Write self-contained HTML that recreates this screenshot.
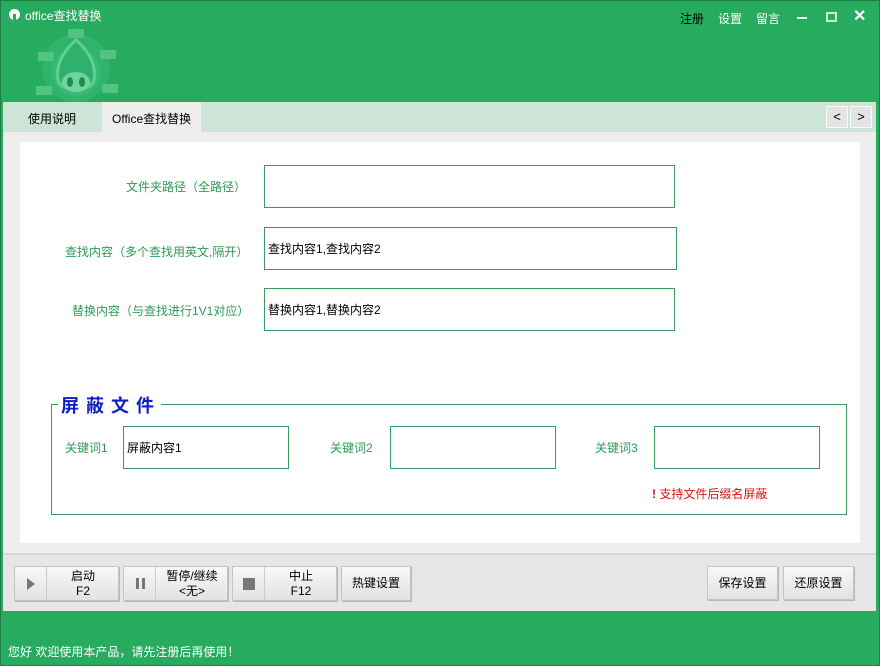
<!DOCTYPE html>
<html><head><meta charset="utf-8"><style>
*{margin:0;padding:0;box-sizing:border-box}
body{width:880px;height:666px;overflow:hidden;background:#27ab5f;font-family:"Liberation Sans","Noto Sans CJK SC",sans-serif;font-size:12px;position:relative}
.abs{position:absolute}
.lbl{color:#2e9a5a;font-size:12px;position:absolute}
.in{position:absolute;background:#fff;border:1px solid #3a9a62;font-size:12px;color:#000;padding-left:3px;display:flex;align-items:center}
.btn{position:absolute;background:linear-gradient(#f8f8f8,#e2e2e2);border:1px solid #c4c4c4;box-shadow:1px 1px 0 #b8b8b8;font-size:12px;color:#000;text-align:center}
</style></head><body>
<div class="abs" style="left:0;top:0;width:880px;height:666px;border:1px solid #1d7d45"></div>
<!-- title -->
<div class="abs" style="left:9px;top:9px;width:11px;height:11px;border-radius:50%;background:#fff"></div>
<div class="abs" style="left:13px;top:14px;width:3px;height:7px;background:#27ab5f"></div>
<div class="abs" style="left:25px;top:7px;color:#fff;font-size:12px">office查找替换</div>
<svg class="abs" style="left:28px;top:24px" width="100" height="80">
<circle cx="48" cy="44" r="34" fill="#3fc07a" opacity=".4"/>
<circle cx="48" cy="48" r="24" fill="#3cbf78" opacity=".6"/>
<path d="M48 16 C32 30 28 44 30 56 C32 68 64 68 66 56 C68 44 64 30 48 16Z" fill="#30b06d" stroke="#5fcf92" stroke-width="3"/>
<ellipse cx="48" cy="58" rx="14" ry="10" fill="#6fd49e"/>
<ellipse cx="42" cy="58" rx="3" ry="5" fill="#1f8a50"/><ellipse cx="54" cy="58" rx="3" ry="5" fill="#1f8a50"/>
<g fill="#5ec98e" opacity=".8"><rect x="40" y="5" width="16" height="9"/><rect x="10" y="28" width="16" height="9"/>
<rect x="72" y="26" width="16" height="9"/><rect x="8" y="62" width="16" height="9"/>
<rect x="74" y="60" width="16" height="9"/></g>
</svg>
<div class="abs" style="left:680px;top:10px;color:#000;font-size:12px">注册</div>
<div class="abs" style="left:718px;top:10px;color:#fff;font-size:12px">设置</div>
<div class="abs" style="left:756px;top:10px;color:#fff;font-size:12px">留言</div>
<div class="abs" style="left:797px;top:17px;width:10px;height:2px;background:#fff"></div>
<div class="abs" style="left:826px;top:12px;width:11px;height:10px;border:2px solid #c8ecd6"></div>
<div class="abs" style="left:853px;top:6px;color:#fff;font-size:16px;font-weight:bold">✕</div>
<!-- tabs -->
<div class="abs" style="left:3px;top:102px;width:873px;height:30px;background:#cce5d6"></div>
<div class="abs" style="left:28px;top:110px;font-size:12px">使用说明</div>
<div class="abs" style="left:102px;top:102px;width:99px;height:30px;background:#eeeeee;padding:8px 0 0 10px;font-size:12px">Office查找替换</div>
<div class="abs" style="left:826px;top:106px;width:22px;height:22px;background:#e4e4e4;border:1px solid #fafafa;text-align:center;line-height:20px;font-size:13px">&lt;</div>
<div class="abs" style="left:850px;top:106px;width:22px;height:22px;background:#e4e4e4;border:1px solid #fafafa;text-align:center;line-height:20px;font-size:13px">&gt;</div>
<!-- content -->
<div class="abs" style="left:3px;top:132px;width:873px;height:421px;background:#eeeeee"></div>
<div class="abs" style="left:20px;top:142px;width:840px;height:401px;background:#fff"></div>
<div class="lbl" style="left:126px;top:178px">文件夹路径（全路径）</div>
<div class="in" style="left:264px;top:165px;width:411px;height:43px"></div>
<div class="lbl" style="left:65px;top:243px">查找内容（多个查找用英文,隔开）</div>
<div class="in" style="left:264px;top:227px;width:413px;height:43px">查找内容1,查找内容2</div>
<div class="lbl" style="left:72px;top:302px">替换内容（与查找进行1V1对应）</div>
<div class="in" style="left:264px;top:288px;width:411px;height:43px">替换内容1,替换内容2</div>
<div class="abs" style="left:51px;top:404px;width:796px;height:111px;border:1px solid #3a9a62"></div>
<div class="abs" style="left:58px;top:392px;background:#fff;color:#0a1fc8;font-size:18px;font-weight:bold;letter-spacing:7px;padding:0 0 0 3px">屏蔽文件</div>
<div class="lbl" style="left:65px;top:439px">关键词1</div>
<div class="in" style="left:123px;top:426px;width:166px;height:43px">屏蔽内容1</div>
<div class="lbl" style="left:330px;top:439px">关键词2</div>
<div class="in" style="left:390px;top:426px;width:166px;height:43px"></div>
<div class="lbl" style="left:595px;top:439px">关键词3</div>
<div class="in" style="left:654px;top:426px;width:166px;height:43px"></div>
<div class="abs" style="left:652px;top:485px;color:#d01818;font-size:12px"><b>!</b> 支持文件后缀名屏蔽</div>
<!-- toolbar -->
<div class="abs" style="left:3px;top:553px;width:873px;height:58px;background:#e6e6e6;border-top:2px solid #d8d8d8"></div>
<div class="btn" style="left:14px;top:566px;width:105px;height:35px"><div class="abs" style="left:0;top:0;width:32px;height:33px;border-right:1px solid #ccc"></div><div class="abs" style="left:12px;top:11px;border-left:8px solid #777;border-top:6px solid transparent;border-bottom:6px solid transparent"></div><div class="abs" style="left:32px;width:72px;top:2px;line-height:15px">启动<br>F2</div></div>
<div class="btn" style="left:123px;top:566px;width:105px;height:35px"><div class="abs" style="left:0;top:0;width:32px;height:33px;border-right:1px solid #ccc"></div><div class="abs" style="left:12px;top:11px;width:3px;height:11px;background:#777"></div><div class="abs" style="left:18px;top:11px;width:3px;height:11px;background:#777"></div><div class="abs" style="left:32px;width:72px;top:2px;line-height:15px">暂停/继续<br>&lt;无&gt;</div></div>
<div class="btn" style="left:232px;top:566px;width:105px;height:35px"><div class="abs" style="left:0;top:0;width:32px;height:33px;border-right:1px solid #ccc"></div><div class="abs" style="left:10px;top:11px;width:12px;height:12px;background:#777"></div><div class="abs" style="left:32px;width:72px;top:2px;line-height:15px">中止<br>F12</div></div>
<div class="btn" style="left:341px;top:566px;width:70px;height:35px;line-height:33px">热键设置</div>
<div class="btn" style="left:707px;top:566px;width:71px;height:34px;line-height:32px">保存设置</div>
<div class="btn" style="left:783px;top:566px;width:71px;height:34px;line-height:32px">还原设置</div>
<div class="abs" style="left:8px;top:643px;color:#fff;font-size:12px">您好 欢迎使用本产品，请先注册后再使用！</div>
</body></html>
